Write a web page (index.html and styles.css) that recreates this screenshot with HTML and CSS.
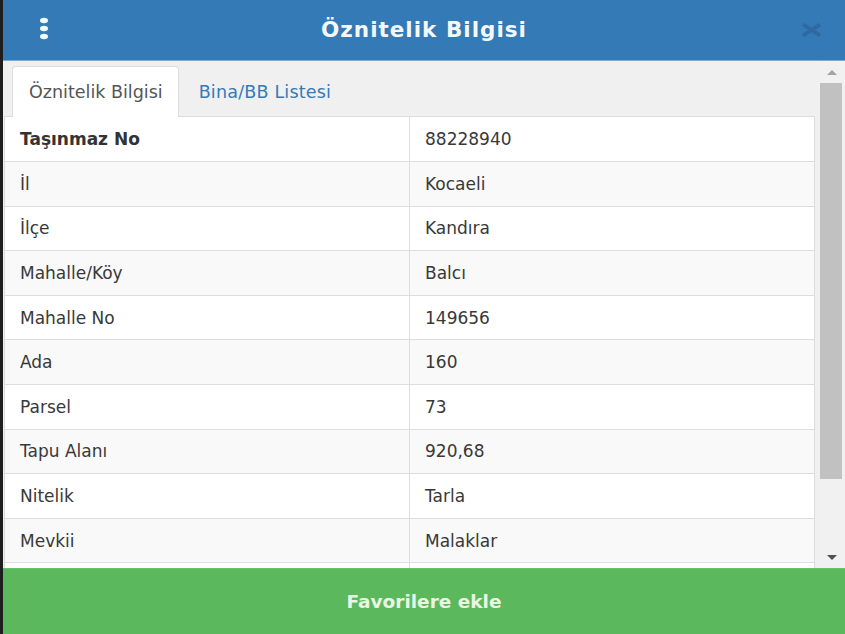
FILE: index.html
```html
<!DOCTYPE html>
<html lang="tr">
<head>
<meta charset="utf-8">
<title>Öznitelik Bilgisi</title>
<link rel="stylesheet" href="styles.css">
</head>
<body>
<div class="app">
  <header class="header">
    <div class="header-left">
      <svg class="menu-icon" width="10" height="24" viewBox="0 0 10 24" aria-hidden="true">
        <ellipse cx="5" cy="3.5" rx="4" ry="2.8" fill="#f4f8fc"/>
        <ellipse cx="5" cy="11.5" rx="4" ry="2.8" fill="#f4f8fc"/>
        <ellipse cx="5" cy="19.5" rx="4" ry="2.8" fill="#f4f8fc"/>
      </svg>
    </div>
    <h1 class="title">Öznitelik Bilgisi</h1>
    <div class="header-right">
      <svg class="close-icon" width="23" height="14" viewBox="0 0 23 14" aria-hidden="true">
        <path d="M3 1.5 L20 12.5 M20 1.5 L3 12.5" stroke="#3068a0" stroke-width="3.8" stroke-linecap="butt"/>
      </svg>
    </div>
  </header>

  <main class="body">
    <section class="content">
      <nav class="tabs">
        <span class="tab tab-active">Öznitelik Bilgisi</span>
        <span class="tab tab-link">Bina/BB Listesi</span>
      </nav>
      <table class="attr">
        <tbody>
          <tr><td class="key">Taşınmaz No</td><td>88228940</td></tr>
          <tr><td>İl</td><td>Kocaeli</td></tr>
          <tr><td>İlçe</td><td>Kandıra</td></tr>
          <tr><td>Mahalle/Köy</td><td>Balcı</td></tr>
          <tr><td>Mahalle No</td><td>149656</td></tr>
          <tr><td>Ada</td><td>160</td></tr>
          <tr><td>Parsel</td><td>73</td></tr>
          <tr><td>Tapu Alanı</td><td>920,68</td></tr>
          <tr><td>Nitelik</td><td>Tarla</td></tr>
          <tr><td>Mevkii</td><td>Malaklar</td></tr>
          <tr><td></td><td></td></tr>
        </tbody>
      </table>
    </section>
    <div class="scrollbar" aria-hidden="true">
      <div class="sb-btn"><span class="arrow-up"></span></div>
      <div class="sb-track"><div class="sb-thumb"></div></div>
      <div class="sb-btn"><span class="arrow-down"></span></div>
    </div>
  </main>

  <footer class="footer">
    <button class="fav-btn" type="button">Favorilere ekle</button>
  </footer>
</div>
</body>
</html>
```

FILE: styles.css
```css
html, body {
  margin: 0;
  padding: 0;
  height: 100%;
}

body {
  background: #1e1e1e;
  font-family: "DejaVu Sans", Verdana, sans-serif;
  color: #333;
  overflow: hidden;
}

.app {
  margin-left: 3px;
  height: 634px;
  display: flex;
  flex-direction: column;
  background: #f0f0f0;
}

.header {
  height: 60px;
  flex: none;
  background: #337ab7;
  border-bottom: 1px solid #79a9d6;
  display: grid;
  grid-template-columns: 1fr auto 1fr;
  align-items: center;
}

.header-left {
  padding-left: 36px;
  display: flex;
  align-items: center;
}

.menu-icon {
  display: block;
  margin-top: -2px;
}

.title {
  margin: 0;
  font-size: 21.5px;
  letter-spacing: 1px;
  font-weight: bold;
  color: #f4f8fc;
  line-height: 1;
}

.header-right {
  display: flex;
  justify-content: flex-end;
  padding-right: 22px;
}

.close-icon {
  display: block;
}

.body {
  flex: 1;
  min-height: 0;
  display: flex;
  overflow: hidden;
}

.content {
  flex: 1;
  min-width: 0;
  overflow: hidden;
  padding: 0 3px 0 1px;
}

.tabs {
  display: flex;
  align-items: flex-end;
  margin-top: 5px;
  padding-left: 8px;
  border-bottom: 1px solid #dddddd;
}

.tab {
  height: 49px;
  display: flex;
  align-items: center;
  padding: 0 15px 0 16px;
  font-size: 17.5px;
  margin-right: 2px;
  border: 1px solid transparent;
  border-bottom: none;
  border-radius: 4px 4px 0 0;
}

.tab-active {
  background: #ffffff;
  border-color: #dddddd;
  color: #555555;
  margin-bottom: -1px;
  height: 50px;
}

.tab-link {
  color: #337ab7;
  padding-left: 17px;
  letter-spacing: 0.2px;
}

.attr {
  width: 100%;
  border-collapse: collapse;
  background: #ffffff;
  font-size: 17px;
  table-layout: fixed;
}

.attr td {
  width: 50%;
  padding: 0 15px;
  height: 44.6px;
  box-sizing: border-box;
  line-height: 20px;
  border: 1px solid #dddddd;
  border-top: none;
  vertical-align: middle;
  color: #383838;
}

.attr tr:nth-child(even) td {
  background: #f9f9f9;
}

.attr .key {
  font-weight: bold;
  color: #333333;
}

.scrollbar {
  width: 27px;
  flex: none;
  display: flex;
  flex-direction: column;
  background: #f1f1f1;
}

.sb-btn {
  height: 22px;
  display: flex;
  align-items: center;
  justify-content: center;
  flex: none;
}

.arrow-up,
.arrow-down {
  width: 0;
  height: 0;
  border-left: 5px solid transparent;
  border-right: 5px solid transparent;
}

.arrow-up {
  border-bottom: 5px solid #a3a3a3;
}

.arrow-down {
  border-top: 5px solid #505050;
}

.sb-track {
  flex: 1;
  padding: 0 3px 0 2px;
}

.sb-thumb {
  height: 396px;
  background: #c1c1c1;
}

.footer {
  height: 66px;
  flex: none;
  display: flex;
}

.fav-btn {
  flex: 1;
  border: none;
  border-top: 1px solid #68c168;
  background: #5cb85c;
  color: #e9f6e4;
  font-family: "DejaVu Sans", Verdana, sans-serif;
  font-size: 18.5px;
  font-weight: bold;
  padding: 0;
  margin: 0;
}
```
